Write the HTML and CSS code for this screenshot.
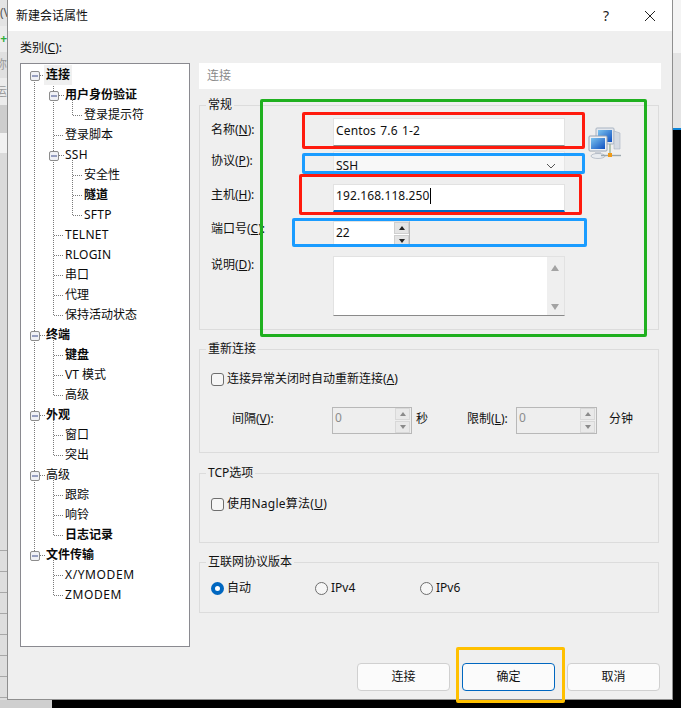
FILE: index.html
```html
<!DOCTYPE html>
<html lang="zh-CN">
<head>
<meta charset="utf-8">
<title>新建会话属性</title>
<link rel="stylesheet" href="styles.css">
</head>
<body>
<div class="page">
  <div class="top">
    <div class="strip-left">
      <div class="s s1">(V</div>
      <div class="s s2">+</div>
      <div class="s s3">称</div>
      <div class="s s4">运</div>
      <div class="s s5"></div>
      <div class="s s6"></div>
      <div class="s s7"></div>
      <div class="s s8"></div>
    </div>
    <div class="dialog">
      <div class="titlebar">
        <span class="title">新建会话属性</span>
        <span class="help">?</span>
        <svg class="close" width="12" height="12" viewBox="0 0 12 12"><path d="M1 1L11 11M11 1L1 11" stroke="#222" stroke-width="1" fill="none"/></svg>
      </div>
      <div class="main">
        <div class="left-pane">
          <div class="cat-label">类别(<u>C</u>):</div>
          <div class="tree">
            <svg class="tree-lines" width="168" height="582" viewBox="21 64 168 582">
              <defs>
                <g id="b">
                  <rect x="0.5" y="0.5" width="9" height="9" rx="1.5" fill="#f0f1f5" stroke="#8c8c8c"/>
                  <path d="M2 5H8" stroke="#3f4f8c" stroke-width="1"/>
                </g>
              </defs>
              <path class="dots" d="M34.5 80V555M40 75.5H45M53.5 80V315.5M59 95.5H64M72.5 100V115.5M73 115.5H82M54 135.5H63M59 155.5H64M72.5 160V215.5M73 175.5H82M73 195.5H82M73 215.5H82M54 235.5H63M54 255.5H63M54 275.5H63M54 295.5H63M54 315.5H63M40 335.5H45M53.5 340V395.5M54 355.5H63M54 375.5H63M54 395.5H63M40 415.5H45M53.5 420V455.5M54 435.5H63M54 455.5H63M40 475.5H45M53.5 480V535.5M54 495.5H63M54 515.5H63M54 535.5H63M40 555.5H45M53.5 560V595.5M54 575.5H63M54 595.5H63"/>
              <use href="#b" x="30" y="71"/>
              <use href="#b" x="49" y="91"/>
              <use href="#b" x="49" y="151"/>
              <use href="#b" x="30" y="331"/>
              <use href="#b" x="30" y="411"/>
              <use href="#b" x="30" y="471"/>
              <use href="#b" x="30" y="551"/>
            </svg>
            <div class="row l0 b"><span class="sel">连接</span></div>
            <div class="row l1 b">用户身份验证</div>
            <div class="row l2">登录提示符</div>
            <div class="row l1">登录脚本</div>
            <div class="row l1 lat">SSH</div>
            <div class="row l2">安全性</div>
            <div class="row l2 b">隧道</div>
            <div class="row l2 lat">SFTP</div>
            <div class="row l1 lat">TELNET</div>
            <div class="row l1 lat">RLOGIN</div>
            <div class="row l1">串口</div>
            <div class="row l1">代理</div>
            <div class="row l1">保持活动状态</div>
            <div class="row l0 b">终端</div>
            <div class="row l1 b">键盘</div>
            <div class="row l1">VT 模式</div>
            <div class="row l1">高级</div>
            <div class="row l0 b">外观</div>
            <div class="row l1">窗口</div>
            <div class="row l1">突出</div>
            <div class="row l0">高级</div>
            <div class="row l1">跟踪</div>
            <div class="row l1">响铃</div>
            <div class="row l1 b">日志记录</div>
            <div class="row l0 b">文件传输</div>
            <div class="row l1 wide">X/YMODEM</div>
            <div class="row l1 wide">ZMODEM</div>
          </div>
        </div>
        <div class="right-pane">
          <div class="header">连接</div>
          <fieldset class="group g1">
            <legend>常规</legend>
            <div class="form">
              <label class="lb p4 r1">名称(<u>N</u>):</label>
              <div class="field tall name r1"><span>Centos 7.6 1-2</span></div>
              <svg class="net-icon" width="34" height="34" viewBox="0 0 34 34">
                <defs>
                  <linearGradient id="scr" x1="0" y1="0" x2="1" y2="1"><stop offset="0" stop-color="#7cc4ef"/><stop offset="1" stop-color="#0e4fc0"/></linearGradient>
                </defs>
                <rect x="8" y="1" width="18" height="16" rx="1" fill="#e4e8ee" stroke="#a9b4c2"/>
                <rect x="10" y="3" width="14" height="12" fill="url(#scr)"/>
                <path d="M26 4L32 6V22L26 22Z" fill="#d4dae2" stroke="#a9b4c2" stroke-width="0.6"/>
                <rect x="1" y="9" width="18" height="15" rx="1" fill="#eef1f5" stroke="#97a3b2"/>
                <rect x="3" y="11" width="14" height="11" fill="url(#scr)"/>
                <rect x="7" y="24" width="6" height="3" fill="#c9ced6"/>
                <ellipse cx="10" cy="29" rx="7" ry="2.5" fill="#e9ecf0" stroke="#a6afbb" stroke-width="0.7"/>
                <path d="M13 28.5H33" stroke="#9ba7ae" stroke-width="1.4"/>
                <path d="M22 17V26" stroke="#9bb39b" stroke-width="1.4"/>
                <rect x="20" y="26" width="4" height="4" fill="#f09a17"/>
              </svg>
              <label class="lb p2 r2">协议(<u>P</u>):</label>
              <div class="combo r2"><span>SSH</span><svg width="10" height="6" viewBox="0 0 10 6"><path d="M1 1L5 5L9 1" stroke="#555" fill="none"/></svg></div>
              <label class="lb p3 r3">主机(<u>H</u>):</label>
              <div class="field tall focus r3"><span>192.168.118.250</span><i class="caret"></i></div>
              <label class="lb r4">端口号(<u>C</u>):</label>
              <div class="spin r4">
                <span class="spin-val">22</span>
                <div class="spin-btns">
                  <span class="sb"><i class="up"></i></span>
                  <span class="sb"><i class="down"></i></span>
                </div>
              </div>
              <label class="lb p1 r5">说明(<u>D</u>):</label>
              <div class="memo r5">
                <div class="scroll"><i class="sup"></i><i class="sdown"></i></div>
              </div>
            </div>
          </fieldset>
          <fieldset class="group g2">
            <legend>重新连接</legend>
            <div class="check-row first"><i class="check"></i><span>连接异常关闭时自动重新连接(<u>A</u>)</span></div>
            <div class="interval">
              <label class="t w-int">间隔(<u>V</u>):</label>
              <div class="spin off w-sp1"><span class="spin-val">0</span><div class="spin-btns"><span class="sb"><i class="up"></i></span><span class="sb"><i class="down"></i></span></div></div>
              <span class="t w-sec">秒</span>
              <label class="t w-lim">限制(<u>L</u>):</label>
              <div class="spin off w-sp2"><span class="spin-val">0</span><div class="spin-btns"><span class="sb"><i class="up"></i></span><span class="sb"><i class="down"></i></span></div></div>
              <span class="t w-min">分钟</span>
            </div>
          </fieldset>
          <fieldset class="group g3">
            <legend>TCP选项</legend>
            <div class="check-row tcp"><i class="check"></i><span class="lat">使用Nagle算法(<u>U</u>)</span></div>
          </fieldset>
          <fieldset class="group g4">
            <legend>互联网协议版本</legend>
            <div class="radios">
              <div class="radio-item ra"><i class="radio on"></i><span>自动</span></div>
              <div class="radio-item rb"><i class="radio"></i><span>IPv4</span></div>
              <div class="radio-item"><i class="radio"></i><span>IPv6</span></div>
            </div>
          </fieldset>
        </div>
      </div>
      <div class="buttons">
        <div class="btn">连接</div>
        <div class="btn primary">确定</div>
        <div class="btn">取消</div>
      </div>
    </div>
    <div class="strip-right">
      <div class="sr1"></div>
      <div class="sr2"></div>
      <div class="sr3"></div>
    </div>
  </div>
  <div class="bottom"><div class="bottom-grey"></div></div>
  <div class="mark green"></div>
  <div class="mark red1"></div>
  <div class="mark blue1"></div>
  <div class="mark red2"></div>
  <div class="mark blue2"></div>
  <div class="mark yellow"></div>
</div>
</body>
</html>
```
FILE: styles.css
```css
* { box-sizing: border-box; }
html, body { margin: 0; padding: 0; }
body {
  width: 681px; height: 708px; overflow: hidden; background: #000;
  font-family: "Noto Sans", "Noto Sans CJK SC", sans-serif;
  font-size: 12px; line-height: 16px; color: #111;
}
u { text-decoration: underline; text-underline-offset: 1px; }
.page { position: relative; width: 681px; height: 708px; display: flex; flex-direction: column; }
.top { display: flex; height: 700px; }
.bottom { height: 8px; background: #000; }
.bottom-grey { width: 52px; height: 8px; background: #cfcfcf; }

.strip-left { width: 7px; display: flex; flex-direction: column; background: #d6d6d6; overflow: hidden; }
.s { width: 7px; overflow: hidden; white-space: nowrap; display: flex; justify-content: flex-end; align-items: center; color: #555; font-size: 12px; }
.s1 { height: 26px; background: #e4e4e4; justify-content: flex-start; }
.s2 { height: 26px; background: #ececec; color: #2fae3c; font-weight: 700; }
.s3 { height: 26px; background: #e0e0e0; color: #9a9a9a; }
.s4 { height: 27px; background: #ececec; color: #9a9a9a; }
.s5 { height: 28px; background: #cdcdcd; }
.s6 { height: 20px; background: #f1f1f1; }
.s7 { height: 377px; background: #dadada; }
.s8 { height: 170px; background: repeating-linear-gradient(#dedede 0, #dedede 20px, #a8a8a8 20px, #a8a8a8 21px); }

.strip-right { width: 8px; display: flex; flex-direction: column; }
.sr1 { height: 53px; background: #f4f4f4; }
.sr2 { height: 75px; background: #e4e4e4; }
.sr3 { height: 2px; background: #0b84d8; }

.dialog {
  width: 666px; height: 700px; background: #efefef;
  border: 1px solid #8f8f8f; border-top: 0;
  display: flex; flex-direction: column;
}
.titlebar { height: 31px; background: #fff; display: flex; align-items: center; padding-left: 8px; flex: none; }
.title { color: #111; flex: 1; }
.help { font-size: 14px; margin-right: 35px; color: #222; }
.close { margin-right: 16px; }

.main { flex: none; height: 632px; padding: 0 11px 0 12px; display: flex; gap: 9px; }
.left-pane { width: 170px; }
.cat-label { height: 32px; padding-top: 9px; }
.tree { position: relative; height: 584px; background: #fff; border: 1px solid #8a8a90; padding-top: 1px; }
.tree-lines { position: absolute; left: 0; top: 0; }
.dots { fill: none; stroke: #7a7a7a; stroke-width: 1; stroke-dasharray: 1 1; shape-rendering: crispEdges; }
.row { position: relative; height: 20px; line-height: 20px; white-space: nowrap; color: #0a0a0a; }
.l0 { padding-left: 25px; }
.l1 { padding-left: 44px; }
.l2 { padding-left: 63px; }
.b { font-weight: 700; }
.lat { letter-spacing: 0.25px; }
.wide { letter-spacing: 0.6px; }
.sel { display: inline-block; background: #f0f0f0; margin-left: -2px; padding: 0 2px; }

.right-pane { width: 462px; padding-top: 32px; }
.header { height: 26px; line-height: 26px; background: #fff; color: #8a8a8a; padding-left: 8px; margin-bottom: 8px; }
.group { margin: 0 2px 0 0; padding: 0; border: 1px solid #dcdcdc; min-width: 0; }
.group legend { margin-left: 6px; padding: 0 2px; line-height: 16px; }
.g1 { height: 233px; margin-bottom: 11px; }
.g2 { height: 112px; margin-bottom: 12px; }
.g3 { height: 78px; margin-bottom: 11px; }
.g4 { height: 59px; }

.form {
  padding: 5px 0 0 11px;
  display: grid;
  grid-template-columns: 122px 232px 34px;
  grid-template-rows: 33px 33px 37px 35px 60px;
}
.lb { display: block; grid-column: 1; }
.p1 { padding-top: 1px; } .p2 { padding-top: 2px; } .p3 { padding-top: 3px; } .p4 { padding-top: 4px; }
.r1 { grid-row: 1; } .r2 { grid-row: 2; } .r3 { grid-row: 3; } .r4 { grid-row: 4; } .r5 { grid-row: 5; }
.field, .combo, .memo, .spin { grid-column: 2; }
.field {
  background: #fff; border: 1px solid #e2e2e2; border-bottom-color: #8a8a8a;
  padding-left: 2px; display: flex; align-items: center; letter-spacing: 0.1px;
}
.tall { height: 28px; padding-bottom: 2px; }
.name { word-spacing: 1px; letter-spacing: 0.15px; }
.focus { border-bottom: 2px solid #0067c0; padding-bottom: 4px; }
.caret { display: inline-block; width: 1px; height: 16px; background: #000; }
.combo {
  height: 25px; background: #f8f8f8; border: 1px solid #e6e6e6; padding: 5px 8px 0 2px;
  display: flex; align-items: center; justify-content: space-between;
}
.net-icon { grid-column: 3; grid-row: 1 / 3; margin: 9px 0 0 23px; overflow: visible; }
.spin {
  width: 77px; height: 26px; background: #fff; border: 1px solid #e2e2e2; border-right: 1px solid #b5b5b5;
  display: flex; justify-content: space-between; padding-left: 2px; align-items: center;
}
.spin-val { padding-bottom: 2px; }
.spin-btns { display: flex; flex-direction: column; gap: 1px; width: 15px; }
.sb { height: 12px; background: #e4e4e4; border: 1px solid #cfcfcf; display: flex; align-items: center; justify-content: center; }
.up, .down { width: 0; height: 0; border-left: 3.5px solid transparent; border-right: 3.5px solid transparent; }
.up { border-bottom: 4px solid #222; }
.down { border-top: 4px solid #222; }
.memo {
  width: 232px; height: 60px; background: #fff; border: 1px solid #e2e2e2; border-bottom-color: #8a8a8a;
  display: flex; justify-content: flex-end;
}
.scroll { width: 17px; background: #efefef; display: flex; flex-direction: column; justify-content: space-between; align-items: center; padding: 8px 1px 5px 0; }
.sup, .sdown { width: 0; height: 0; border-left: 4.5px solid transparent; border-right: 4.5px solid transparent; }
.sup { border-bottom: 6px solid #a3a3a3; }
.sdown { border-top: 6px solid #a3a3a3; }

.check-row { display: flex; align-items: center; gap: 3px; padding-left: 11px; }
.check-row.first { margin-top: 14px; }
.check-row.tcp { margin-top: 15px; }
.check { width: 13px; height: 13px; background: #f6f6f6; border: 1px solid #6e6e6e; border-radius: 3px; flex: none; }
.interval { display: flex; align-items: center; margin-top: 20px; padding-left: 32px; height: 27px; }
.interval .spin { flex: none; height: 27px; background: #eee; border: 1px solid #b8b8b8; color: #8c8c8c; }
.interval .spin-val { padding-bottom: 6px; }
.t { padding-bottom: 4px; }
.w-int { width: 100px; }
.interval .w-sp1 { width: 80px; }
.w-sec { width: 51px; margin-left: 4px; }
.w-lim { width: 49px; }
.interval .w-sp2 { width: 81px; }
.w-min { margin-left: 12px; }
.off .sb { background: #e9e9e9; border-color: #d8d8d8; }
.off .up { border-bottom-color: #8a8a8a; }
.off .down { border-top-color: #8a8a8a; }
.off .spin-btns { margin-right: 1px; }

.radios { display: flex; padding: 10px 0 0 11px; }
.radio-item { display: flex; align-items: center; gap: 3px; }
.ra { width: 104px; }
.rb { width: 105px; }
.radio { width: 13px; height: 13px; border: 1px solid #6e6e6e; border-radius: 50%; background: #f6f6f6; flex: none; }
.radio.on { border: 4px solid #0067c0; background: #fff; }

.buttons { flex: none; display: flex; justify-content: flex-end; gap: 12px; padding: 0 12px 0 0; }
.btn { width: 93px; height: 28px; background: #fbfbfb; border: 1px solid #d0d0d0; border-radius: 4px; display: flex; align-items: center; justify-content: center; color: #111; }
.btn.primary { border-color: #0067c0; }

.mark { position: absolute; border: 3px solid; border-radius: 2px; pointer-events: none; }
.green { left: 260px; top: 99px; width: 387px; height: 238px; border-color: #1fb01f; }
.red1 { left: 302px; top: 112px; width: 283px; height: 37px; border-color: #ff1a0d; }
.blue1 { left: 302px; top: 153px; width: 283px; height: 21px; border-color: #1a9cff; }
.red2 { left: 299px; top: 174px; width: 283px; height: 41px; border-color: #ff1a0d; }
.blue2 { left: 292px; top: 218px; width: 295px; height: 29px; border-color: #1a9cff; }
.yellow { left: 456px; top: 647px; width: 109px; height: 56px; border-color: #ffc000; }
```
